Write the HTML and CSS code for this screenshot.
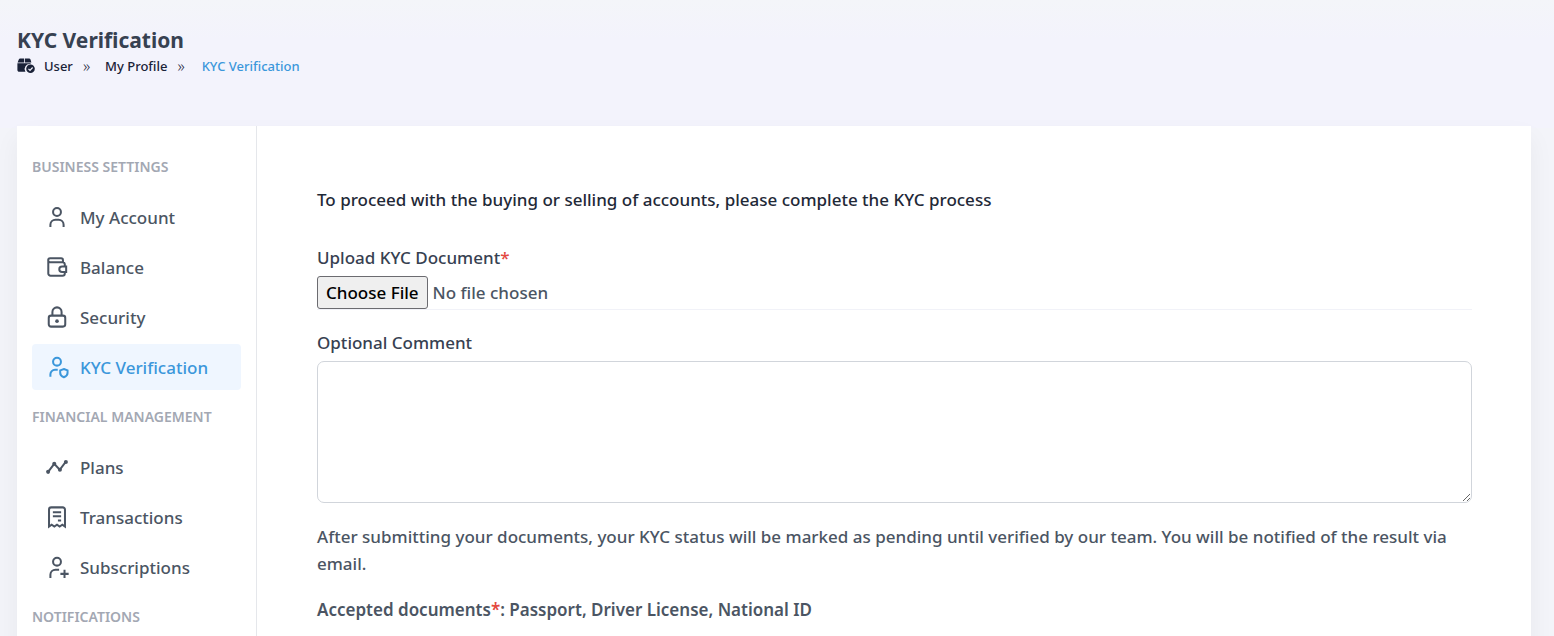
FILE: index.html
```
<!DOCTYPE html>
<html lang="en">
<head>
    <meta charset="UTF-8">
    <meta name="viewport" content="width=device-width, initial-scale=1.0">
    <title>KYC Verification</title>
    <link rel="stylesheet" href="styles.css">
</head>
<body>
    <!-- Page header -->
    <header class="page-header">
        <h1>KYC Verification</h1>
        <nav class="breadcrumb" aria-label="Breadcrumb">
            <svg class="crumb-icon" viewBox="0 0 18 16" fill="currentColor">
                <path d="M3.200 0.500h4v4H0.600L1.800 1.500C2 0.900 2.500 0.500 3.200 0.500zM8 0.500h4.100c.700 0 1.200.400 1.400 1l.900 3H8zM0.400 5.200h13.200v1A5 5 0 0 0 8.400 13.800H2.200C1.200 13.800 0.400 13 0.400 12z"/>
                <circle cx="13.500" cy="10.800" r="4.300"/>
                <path d="M11.500 10.900l1.500 1.500 2.600-2.900" fill="none" stroke="#f3f3fc" stroke-width="1.200"/>
            </svg>
            <a href="#">User</a>
            <span class="sep">»</span>
            <a href="#">My Profile</a>
            <span class="sep">»</span>
            <a href="#" class="current">KYC Verification</a>
        </nav>
    </header>

    <div class="card">
        <!-- Sidebar -->
        <aside class="sidebar">
            <h2>Business Settings</h2>
            <a href="#" class="item">
                <svg viewBox="0 0 24 24"><circle cx="12" cy="6.500" r="4.300"/><path d="M4.800 23v-2.500a5.500 5.500 0 0 1 5.500-5.500h3.400a5.500 5.500 0 0 1 5.500 5.500V23"/></svg>
                My Account
            </a>
            <a href="#" class="item">
                <svg viewBox="0 0 24 24"><path d="M2.500 4.500v14.500a2.500 2.500 0 0 0 2.500 2.500h13a2.500 2.500 0 0 0 2.500-2.500v-1.500M20.500 11.500V9A2.500 2.500 0 0 0 18 6.700H4.500a2.100 2.100 0 0 1 0-4.200H16.500a2 2 0 0 1 2 2v2"/><path d="M22 11.500h-4.500a3 3 0 0 0 0 6H22z"/></svg>
                Balance
            </a>
            <a href="#" class="item">
                <svg viewBox="0 0 24 24"><rect x="3" y="10.500" width="18" height="12" rx="2.500"/><path d="M7 10.500V6.500a5 5 0 0 1 10 0v4"/><circle class="dot" cx="12" cy="16.500" r="2"/></svg>
                Security
            </a>
            <a href="#" class="item active">
                <svg viewBox="0 0 24 24"><circle cx="12" cy="6.200" r="4.300"/><path d="M4.800 22.500v-2.500a5 5 0 0 1 5-5h3"/><path d="M19.500 14.200l4 1.500v2.800c0 2.200-1.700 3.800-4 4.700-2.300-.900-4-2.500-4-4.700v-2.800z"/></svg>
                KYC Verification
            </a>
            <h2>Financial Management</h2>
            <a href="#" class="item">
                <svg viewBox="0 0 24 24"><path d="M2.500 17L9 8.500l6 6.500 6.500-8.500"/><circle class="dot" cx="2.300" cy="17.300" r="2.200"/><circle class="dot" cx="9" cy="8.500" r="2.200"/><circle class="dot" cx="15.200" cy="15" r="2.200"/><circle class="dot" cx="21.700" cy="6.500" r="2.200"/></svg>
                Plans
            </a>
            <a href="#" class="item">
                <svg viewBox="0 0 24 24"><path d="M3.300 22.500V4a2.500 2.500 0 0 1 2.500-2.500h12.400A2.500 2.500 0 0 1 20.700 4v18.500l-2.900-2-2.900 2-2.900-2-2.900 2-2.900-2zM7.500 6.700h9M7.500 11.200h9M13 15.700h3.500"/></svg>
                Transactions
            </a>
            <a href="#" class="item">
                <svg viewBox="0 0 24 24"><circle cx="12" cy="6.200" r="4.300"/><path d="M4.800 24v-3.500a5.500 5.500 0 0 1 5.500-5.500h4M20.200 15v9M15.700 19.500h9"/></svg>
                Subscriptions
            </a>
            <h2>Notifications</h2>
        </aside>

        <!-- KYC form -->
        <main class="content">
            <p class="intro">To proceed with the buying or selling of accounts, please complete the KYC process</p>
            <form>
                <label for="kyc-file">Upload KYC Document<span class="required">*</span></label>
                <input type="file" id="kyc-file">
                <label for="comment">Optional Comment</label>
                <textarea id="comment"></textarea>
            </form>
            <p>After submitting your documents, your KYC status will be marked as pending until verified by our team. You will be notified of the result via email.</p>
            <p class="accepted">Accepted documents<span class="required">*</span>: Passport, Driver License, National ID</p>
        </main>
    </div>
</body>
</html>
```

FILE: styles.css
```
* {
    box-sizing: border-box;
}

body {
    margin: 0;
    font-family: "Noto Sans", "Open Sans", sans-serif;
    font-size: 17px;
    font-weight: 500;
    line-height: 27px;
    color: #4b5563;
    background: linear-gradient(#f4f5f9, #f3f3fc 40px) no-repeat #f3f4f9;
    background-size: 100% 128px;
}

a {
    text-decoration: none;
    color: inherit;
}

h1, h2, p {
    margin: 0;
}

.page-header {
    height: 126px;
    padding: 26px 17px 0;
}

h1 {
    font-size: 21px;
    font-weight: 700;
    line-height: 28px;
    color: #374151;
}

.breadcrumb {
    display: flex;
    align-items: center;
    font-size: 13px;
    line-height: 24px;
    color: #1a2238;
}

.crumb-icon {
    width: 18px;
    height: 16px;
    margin-right: 9px;
}

.sep {
    margin: 0 15px 0 10px;
    font-size: 16px;
    font-weight: 300;
}

.current {
    margin-left: 2px;
    color: #3b97db;
}

.card {
    display: flex;
    min-height: calc(100vh - 126px);
    margin: 0 23px 0 17px;
    background: #fff;
    box-shadow: 0 12px 24px rgba(0, 0, 0, 0.05);
}

/* Sidebar */
.sidebar {
    display: flex;
    flex-direction: column;
    gap: 4px;
    flex: none;
    width: 240px;
    padding: 18px 15px;
    border-right: 1px solid #e5e7eb;
}

.sidebar h2 {
    font-size: 14px;
    font-weight: 600;
    line-height: 46px;
    text-transform: uppercase;
    color: #a3a8b3;
}

.item {
    display: flex;
    align-items: center;
    gap: 12px;
    height: 46px;
    padding: 0 14px;
    border-radius: 4px;
}

.item svg {
    width: 22px;
    height: 22px;
    overflow: visible;
    fill: none;
    stroke: currentColor;
    stroke-width: 2.2;
}

.item .dot {
    fill: currentColor;
    stroke: none;
}

.item.active {
    color: #3b97db;
    background: #eff6ff;
}

/* Content */
.content {
    flex: 1;
    padding: 60px 59px 60px 60px;
}

.intro {
    margin-bottom: 32px;
    color: #1f2937;
}

label {
    display: block;
    line-height: 26px;
    color: #374151;
}

.required {
    color: #e3493f;
}

input[type="file"] {
    display: block;
    width: 100%;
    height: 34px;
    margin: 5px 0 20px;
    border: 0;
    border-bottom: 1px solid #f1f2f8;
    font: inherit;
    color: #4b5563;
}

input[type="file"]::file-selector-button {
    height: 33px;
    margin: 0 5px 0 0;
    padding: 0 8px;
    border: 1px solid #6b6b70;
    border-radius: 3px;
    font: inherit;
    color: #000;
    background: #efefef;
}

textarea {
    display: block;
    width: 100%;
    height: 142px;
    margin: 5px 0 20px;
    border: 1px solid #d1d5db;
    border-radius: 7px;
    font: inherit;
}

.accepted {
    margin-top: 19px;
    font-weight: 600;
}
```
